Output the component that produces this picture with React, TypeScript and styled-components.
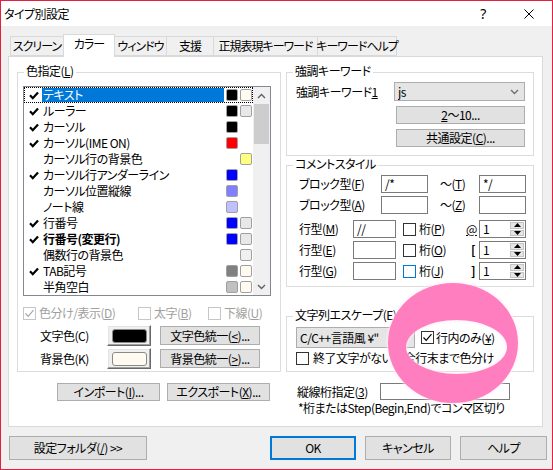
import React from "react";
import styled, { createGlobalStyle } from "styled-components";

const GlobalStyle = createGlobalStyle`
  * { box-sizing: border-box; }
  html, body { margin: 0; padding: 0; background: #ffffff; }
  body {
    font-family: "Noto Sans CJK JP", "Noto Sans", sans-serif;
    font-size: 12px;
    line-height: 16px;
    letter-spacing: -0.5px;
    color: #000;
    font-feature-settings: "palt";
  }
`;

type ColorItem = { name: string; on: boolean; fg?: string; bg?: string; bold?: boolean };

const colorItems: ColorItem[] = [
  { name: "テキスト", on: true, fg: "#000000", bg: "#fffbf0" },
  { name: "ルーラー", on: true, fg: "#000000", bg: "#e8e8e8" },
  { name: "カーソル", on: true, fg: "#000000" },
  { name: "カーソル(IME ON)", on: true, fg: "#ff0000" },
  { name: "カーソル行の背景色", on: false, bg: "#ffff80" },
  { name: "カーソル行アンダーライン", on: true, fg: "#0000ff" },
  { name: "カーソル位置縦線", on: false, fg: "#8080ff" },
  { name: "ノート線", on: false, fg: "#c0c0ff" },
  { name: "行番号", on: true, fg: "#0000ff", bg: "#e8e8e8" },
  { name: "行番号(変更行)", on: true, fg: "#0000ff", bg: "#e8e8e8", bold: true },
  { name: "偶数行の背景色", on: false, bg: "#f0f0f0" },
  { name: "TAB記号", on: true, fg: "#808080", bg: "#fffbf0" },
  { name: "半角空白", on: false, fg: "#c0c0c0", bg: "#fffbf0" },
];

const tabs = [
  { label: "スクリーン", w: 54 },
  { label: "カラー", w: 52, active: true },
  { label: "ウィンドウ", w: 53 },
  { label: "支援", w: 48 },
  { label: "正規表現キーワード", w: 105 },
  { label: "キーワードヘルプ", w: 80 },
];

const lineRows = [
  { label: "M", text: "//", digit: "P", sym: "@", focus: false },
  { label: "E", text: "", digit: "O", sym: "[", focus: false },
  { label: "G", text: "", digit: "J", sym: "]", focus: true },
];

const CheckMark = ({ color = "#000" }: { color?: string }) => (
  <svg width="11" height="11" viewBox="0 0 11 11">
    <polyline points="1.5,5.5 4.2,8.3 9.5,2.2" fill="none" stroke={color} strokeWidth="1.2" />
  </svg>
);

const ListCheck = () => (
  <svg width="10" height="9" viewBox="0 0 10 9">
    <polyline points="1,4.2 3.8,7.2 9,1.5" fill="none" stroke="#000" strokeWidth="2.2" />
  </svg>
);

const Chevron = ({ up, color = "#606060" }: { up?: boolean; color?: string }) => (
  <svg width="9" height="6" viewBox="0 0 9 6">
    <polyline
      points={up ? "1,5 4.5,1.5 8,5" : "1,1 4.5,4.5 8,1"}
      fill="none"
      stroke={color}
      strokeWidth="1.4"
    />
  </svg>
);

const Triangle = ({ up }: { up?: boolean }) => (
  <svg width="7" height="4" viewBox="0 0 7 4">
    <polygon points={up ? "0,4 3.5,0 7,4" : "0,0 3.5,4 7,0"} fill="#000" />
  </svg>
);

const CloseIcon = () => (
  <svg width="10" height="10" viewBox="0 0 10 10">
    <path d="M0.5 0.5 L9.5 9.5 M9.5 0.5 L0.5 9.5" stroke="#000" strokeWidth="1" />
  </svg>
);

const CheckBox = ({ checked, disabled, focus }: { checked?: boolean; disabled?: boolean; focus?: boolean }) => (
  <Box $disabled={disabled} $focus={focus}>
    {checked && <CheckMark color={disabled ? "#a8a8a8" : "#000"} />}
  </Box>
);

export default function App() {
  return (
    <>
      <GlobalStyle />
      <Window>
        <TitleBar>
          <TitleText>タイプ別設定</TitleText>
          <TitleButton>?</TitleButton>
          <TitleButton>
            <CloseIcon />
          </TitleButton>
        </TitleBar>

        <Body>
          <TabStrip>
            {tabs.map((t) => (
              <Tab key={t.label} $w={t.w} $active={!!t.active}>
                {t.label}
              </Tab>
            ))}
          </TabStrip>

          <Panel>
            <LeftColumn>
              <Group $mt={15} $pad="13px 5px 2px 5px">
                <GroupTitle>
                  色指定(<Key>L</Key>)
                </GroupTitle>
                <ColorList>
                  <ListRows>
                    {colorItems.map((item, i) => (
                      <ListRow key={item.name} $focused={i === 0}>
                        <CheckCell>{item.on && <ListCheck />}</CheckCell>
                        <ItemName $selected={i === 0} $bold={!!item.bold}>
                          {item.name}
                        </ItemName>
                        <Swatch $color={item.fg} />
                        <Swatch $color={item.bg} />
                      </ListRow>
                    ))}
                  </ListRows>
                  <ScrollBar>
                    <ScrollArrow>
                      <Chevron up />
                    </ScrollArrow>
                    <ScrollThumb />
                    <ScrollTrack />
                    <ScrollArrow>
                      <Chevron />
                    </ScrollArrow>
                  </ScrollBar>
                </ColorList>

                <OptionRow>
                  <Option $w={115}>
                    <CheckBox checked disabled />
                    <OptionText $disabled>
                      色分け/表示(<Key>D</Key>)
                    </OptionText>
                  </Option>
                  <Option $w={70}>
                    <CheckBox disabled />
                    <OptionText $disabled>
                      太字(<Key>B</Key>)
                    </OptionText>
                  </Option>
                  <Option>
                    <CheckBox disabled />
                    <OptionText $disabled>
                      下線(<Key>U</Key>)
                    </OptionText>
                  </Option>
                </OptionRow>

                <ColorRow $mt={4}>
                  <RowLabel $w={75} $pl={17}>
                    文字色(C)
                  </RowLabel>
                  <ColorButton>
                    <ColorChip $color="#000000" />
                  </ColorButton>
                  <PushButton $w={100} $h={19}>
                    文字色統一(<Key>&lt;</Key>)...
                  </PushButton>
                </ColorRow>
                <ColorRow $mt={2}>
                  <RowLabel $w={75} $pl={17}>
                    背景色(K)
                  </RowLabel>
                  <ColorButton>
                    <ColorChip $color="#fffbf0" />
                  </ColorButton>
                  <PushButton $w={100} $h={19}>
                    背景色統一(<Key>&gt;</Key>)...
                  </PushButton>
                </ColorRow>
              </Group>

              <ImportRow>
                <PushButton $w={103} $h={18}>
                  インポート(<Key>I</Key>)...
                </PushButton>
                <PushButton $w={103} $h={18}>
                  エクスポート(<Key>X</Key>)...
                </PushButton>
              </ImportRow>
            </LeftColumn>

            <RightColumn>
              <Group $mt={15} $pad="9px 8px 8px 9px">
                <GroupTitle>強調キーワード</GroupTitle>
                <KeywordGrid>
                  <RowLabel>
                    強調キーワード<Key>1</Key>
                  </RowLabel>
                  <Combo $w={131} $h={19}>
                    <ComboText>js</ComboText>
                    <Chevron color="#707070" />
                  </Combo>
                  <span />
                  <PushButton $w={129} $h={18}>
                    <Key>2</Key>～10...
                  </PushButton>
                  <span />
                  <PushButton $w={129} $h={18}>
                    共通設定(<Key>C</Key>)...
                  </PushButton>
                </KeywordGrid>
              </Group>

              <Group $mt={9} $pad="9px 7px 6px 12px">
                <GroupTitle>コメントスタイル</GroupTitle>
                <FieldRow>
                  <RowLabel $w={82}>
                    ブロック型(<Key>F</Key>)
                  </RowLabel>
                  <TextBox $w={47}>/*</TextBox>
                  <RowLabel $w={51} $pl={12}>
                    ～(<Key>T</Key>)
                  </RowLabel>
                  <TextBox $w={47}>*/</TextBox>
                </FieldRow>
                <FieldRow $mt={3}>
                  <RowLabel $w={82}>
                    ブロック型(<Key>A</Key>)
                  </RowLabel>
                  <TextBox $w={47} />
                  <RowLabel $w={51} $pl={12}>
                    ～(<Key>Z</Key>)
                  </RowLabel>
                  <TextBox $w={47} />
                </FieldRow>
                {lineRows.map((r, i) => (
                  <FieldRow key={r.label} $mt={i === 0 ? 6 : 3}>
                    <RowLabel $w={54}>
                      行型(<Key>{r.label}</Key>)
                    </RowLabel>
                    <TextBox $w={43}>{r.text}</TextBox>
                    <DigitOption>
                      <CheckBox focus={r.focus} />
                      <OptionText>
                        桁(<Key>{r.digit}</Key>)
                      </OptionText>
                    </DigitOption>
                    <Symbol $bold={r.sym !== "@"}>
                      {r.sym === "@" ? <Key>@</Key> : r.sym}
                    </Symbol>
                    <SpinBox>
                      <SpinValue>1</SpinValue>
                      <SpinButtons>
                        <SpinHalf>
                          <Triangle up />
                        </SpinHalf>
                        <SpinHalf>
                          <Triangle />
                        </SpinHalf>
                      </SpinButtons>
                    </SpinBox>
                  </FieldRow>
                ))}
              </Group>

              <Group $mt={29} $pad="10px 8px 5px 9px">
                <GroupTitle>文字列エスケープ(E)</GroupTitle>
                <FieldRow $h={21}>
                  <Combo $w={119} $h={21}>
                    <ComboText>C/C++言語風 ¥"</ComboText>
                    <Chevron color="#8a8a8a" />
                  </Combo>
                  <EscapeOption>
                    <CheckBox checked />
                    <OptionText>
                      行内のみ(<Key>¥</Key>)
                    </OptionText>
                  </EscapeOption>
                </FieldRow>
                <FieldRow $mt={2} $h={16}>
                  <CheckBox />
                  <OptionLabel>終了文字がない場合行末まで色分け</OptionLabel>
                </FieldRow>
              </Group>

              <VLineRow>
                <RowLabel $w={83}>
                  縦線桁指定(<Key>3</Key>)
                </RowLabel>
                <TextBox $w={130} $h={17} />
              </VLineRow>
              <Note>*桁またはStep(Begin,End)でコンマ区切り</Note>
            </RightColumn>
          </Panel>

          <Footer>
            <PushButton $w={138} $h={24}>
              設定フォルダ(<Key>/</Key>) &gt;&gt;
            </PushButton>
            <FooterButtons>
              <PushButton $w={86} $h={24} $default>
                OK
              </PushButton>
              <PushButton $w={86} $h={24}>
                キャンセル
              </PushButton>
              <PushButton $w={87} $h={24}>
                ヘルプ
              </PushButton>
            </FooterButtons>
          </Footer>
        </Body>

        <RingSvg width="150" height="135" viewBox="0 0 150 135">
          <defs>
            <filter id="soft" x="-10%" y="-10%" width="120%" height="120%">
              <feGaussianBlur stdDeviation="0.5" />
            </filter>
            <filter id="glow" x="-10%" y="-10%" width="120%" height="120%">
              <feGaussianBlur stdDeviation="1.6" />
            </filter>
          </defs>
          <path
            fillRule="evenodd"
            fill="rgba(255,235,245,0.9)"
            filter="url(#glow)"
            d="M6 66 a66 61 0 1 0 132 0 a66 61 0 1 0 -132 0 Z M26 70 a49.5 26 0 1 0 99 0 a49.5 26 0 1 0 -99 0 Z"
          />
          <path
            fillRule="evenodd"
            fill="#ff7ec0"
            filter="url(#soft)"
            d="M7 66 a65 60 0 1 0 130 0 a65 60 0 1 0 -130 0 Z M25 70 a50.5 27 0 1 0 101 0 a50.5 27 0 1 0 -101 0 Z"
          />
        </RingSvg>
      </Window>
    </>
  );
}

const Window = styled.div`
  position: relative;
  width: 553px;
  height: 470px;
  border: 1px solid #e3203f;
  background: #f0f0f0;
  display: flex;
  flex-direction: column;
  overflow: hidden;
`;

const TitleBar = styled.div`
  height: 25px;
  flex-shrink: 0;
  background: #ffffff;
  display: flex;
  align-items: center;
  padding-left: 3px;
`;

const TitleText = styled.span`
  flex: 1;
  font-size: 12px;
`;

const TitleButton = styled.span`
  width: 46px;
  height: 25px;
  display: flex;
  align-items: center;
  justify-content: center;
  font-family: "Noto Sans", sans-serif;
  font-size: 14px;
`;

const Body = styled.div`
  flex: 1;
  display: flex;
  flex-direction: column;
  padding: 8px 5px 0 7px;
`;

const TabStrip = styled.div`
  height: 22px;
  display: flex;
  align-items: flex-end;
  padding-left: 2px;
  position: relative;
  z-index: 1;
`;

const Tab = styled.div<{ $w: number; $active: boolean }>`
  width: ${(p) => p.$w}px;
  height: ${(p) => (p.$active ? 23 : 20)}px;
  margin-left: -1px;
  margin-bottom: ${(p) => (p.$active ? -1 : 0)}px;
  border: 1px solid #d9d9d9;
  border-bottom: ${(p) => (p.$active ? "none" : "1px solid #d9d9d9")};
  background: ${(p) => (p.$active ? "#ffffff" : "#f0f0f0")};
  display: flex;
  align-items: center;
  justify-content: center;
  padding-bottom: ${(p) => (p.$active ? 4 : 0)}px;
  letter-spacing: -1px;
  white-space: nowrap;
  position: relative;
  z-index: ${(p) => (p.$active ? 2 : 1)};
  &:first-child {
    margin-left: 0;
  }
`;

const Panel = styled.div`
  width: 535px;
  height: 371px;
  flex-shrink: 0;
  background: #ffffff;
  border: 1px solid #d9d9d9;
  display: flex;
  gap: 5px;
  padding-left: 8px;
`;

const LeftColumn = styled.div`
  width: 264px;
  display: flex;
  flex-direction: column;
`;

const RightColumn = styled.div`
  width: 248px;
  display: flex;
  flex-direction: column;
`;

const Group = styled.div<{ $mt: number; $pad: string }>`
  position: relative;
  margin-top: ${(p) => p.$mt}px;
  padding: ${(p) => p.$pad};
  border: 1px solid #dcdcdc;
`;

const GroupTitle = styled.span`
  position: absolute;
  top: -10px;
  left: 6px;
  padding: 0 2px;
  background: #ffffff;
  line-height: 16px;
  white-space: nowrap;
`;

const Key = styled.span`
  text-decoration: underline;
  text-underline-offset: 1px;
`;

const ColorList = styled.div`
  width: 248px;
  height: 210px;
  border: 1px solid #828790;
  display: flex;
  background: #ffffff;
`;

const ListRows = styled.div`
  flex: 1;
  display: flex;
  flex-direction: column;
`;

const ListRow = styled.div<{ $focused: boolean }>`
  height: 16px;
  display: flex;
  align-items: center;
  outline: ${(p) => (p.$focused ? "1px dotted #000" : "none")};
  outline-offset: -1px;
`;

const CheckCell = styled.span`
  width: 18px;
  height: 16px;
  padding-left: 5px;
  display: flex;
  align-items: center;
`;

const ItemName = styled.span<{ $selected: boolean; $bold: boolean }>`
  width: 182px;
  height: 14px;
  padding-left: 1px;
  line-height: 14px;
  white-space: nowrap;
  font-weight: ${(p) => (p.$bold ? 700 : 400)};
  background: ${(p) => (p.$selected ? "#0078d7" : "transparent")};
  color: ${(p) => (p.$selected ? "#ffffff" : "#000000")};
`;

const Swatch = styled.span<{ $color?: string }>`
  width: 12px;
  height: 12px;
  margin-left: 2px;
  border-radius: 2px;
  background: ${(p) => p.$color || "transparent"};
  border: 1px solid ${(p) => (p.$color ? "#a0a0a0" : "transparent")};
`;

const ScrollBar = styled.div`
  width: 17px;
  display: flex;
  flex-direction: column;
  background: #f0f0f0;
`;

const ScrollArrow = styled.div`
  height: 17px;
  display: flex;
  align-items: center;
  justify-content: center;
`;

const ScrollThumb = styled.div`
  height: 40px;
  margin: 0 1px;
  background: #cdcdcd;
`;

const ScrollTrack = styled.div`
  flex: 1;
`;

const OptionRow = styled.div`
  margin-top: 9px;
  height: 16px;
  display: flex;
  align-items: center;
`;

const Option = styled.label<{ $w?: number }>`
  ${(p) => (p.$w ? `width: ${p.$w}px;` : "")}
  display: flex;
  align-items: center;
  gap: 3px;
`;

const Box = styled.span<{ $disabled?: boolean; $focus?: boolean }>`
  width: 13px;
  height: 13px;
  flex-shrink: 0;
  background: #ffffff;
  border: 1px solid ${(p) => (p.$focus ? "#0078d7" : p.$disabled ? "#c6c6c6" : "#333333")};
  display: flex;
  align-items: center;
  justify-content: center;
`;

const OptionText = styled.span<{ $disabled?: boolean }>`
  white-space: nowrap;
  color: ${(p) => (p.$disabled ? "#a0a0a0" : "#000000")};
`;

const OptionLabel = styled.span`
  margin-left: 4px;
  white-space: nowrap;
`;

const ColorRow = styled.div<{ $mt: number }>`
  margin-top: ${(p) => p.$mt}px;
  height: 21px;
  display: flex;
  align-items: center;
  gap: 9px;
`;

const RowLabel = styled.span<{ $w?: number; $pl?: number }>`
  ${(p) => (p.$w ? `width: ${p.$w}px;` : "")}
  padding-left: ${(p) => p.$pl || 0}px;
  flex-shrink: 0;
  white-space: nowrap;
`;

const ColorButton = styled.div`
  width: 44px;
  height: 21px;
  background: #f0f0f0;
  border: 1px solid;
  border-color: #ffffff #696969 #696969 #ffffff;
  box-shadow: inset -1px -1px 0 #a0a0a0, inset 1px 1px 0 #e3e3e3;
  display: flex;
  align-items: center;
  justify-content: center;
`;

const ColorChip = styled.span<{ $color: string }>`
  width: 35px;
  height: 14px;
  border-radius: 3px;
  border: 1px solid #8a8a8a;
  background: ${(p) => p.$color};
`;

const PushButton = styled.div<{ $w: number; $h: number; $default?: boolean }>`
  width: ${(p) => p.$w}px;
  height: ${(p) => p.$h}px;
  flex-shrink: 0;
  background: #e1e1e1;
  border: ${(p) => (p.$default ? "2px solid #0078d7" : "1px solid #adadad")};
  display: flex;
  align-items: center;
  justify-content: center;
  white-space: nowrap;
`;

const ImportRow = styled.div`
  margin-top: 11px;
  padding-left: 40px;
  display: flex;
  gap: 7px;
`;

const KeywordGrid = styled.div`
  display: grid;
  grid-template-columns: 98px 131px;
  grid-template-rows: 19px 18px 18px;
  row-gap: 5px;
  align-items: center;
  justify-items: end;
  & > :first-child {
    justify-self: start;
  }
`;

const Combo = styled.div<{ $w: number; $h: number }>`
  width: ${(p) => p.$w}px;
  height: ${(p) => p.$h}px;
  flex-shrink: 0;
  background: #e5e5e5;
  border: 1px solid #adadad;
  display: flex;
  align-items: center;
  padding: 0 5px 0 3px;
`;

const ComboText = styled.span`
  flex: 1;
  white-space: nowrap;
  overflow: hidden;
`;

const FieldRow = styled.div<{ $mt?: number; $h?: number }>`
  margin-top: ${(p) => p.$mt || 0}px;
  height: ${(p) => p.$h || 18}px;
  display: flex;
  align-items: center;
`;

const TextBox = styled.div<{ $w: number; $h?: number }>`
  width: ${(p) => p.$w}px;
  height: ${(p) => p.$h || 18}px;
  flex-shrink: 0;
  background: #ffffff;
  border: 1px solid #7a7a7a;
  padding-left: 3px;
  line-height: 16px;
  white-space: nowrap;
`;

const DigitOption = styled.label`
  width: 70px;
  padding-left: 7px;
  display: flex;
  align-items: center;
  gap: 3px;
`;

const Symbol = styled.span<{ $bold: boolean }>`
  width: 13px;
  padding-right: 4px;
  text-align: right;
  font-weight: ${(p) => (p.$bold ? 700 : 400)};
`;

const SpinBox = styled.div`
  width: 47px;
  height: 18px;
  border: 1px solid #7a7a7a;
  background: #ffffff;
  display: flex;
`;

const SpinValue = styled.span`
  flex: 1;
  padding-left: 3px;
  line-height: 16px;
`;

const SpinButtons = styled.div`
  width: 16px;
  display: flex;
  flex-direction: column;
  gap: 1px;
  padding: 1px;
  background: #ffffff;
`;

const SpinHalf = styled.div`
  flex: 1;
  background: #e6e6e6;
  border: 1px solid #c4c4c4;
  display: flex;
  align-items: center;
  justify-content: center;
`;

const EscapeOption = styled.label`
  margin-left: 6px;
  display: flex;
  align-items: center;
  gap: 2px;
`;

const VLineRow = styled.div`
  margin-top: 11px;
  padding-left: 11px;
  height: 17px;
  display: flex;
  align-items: center;
`;

const Note = styled.div`
  padding-left: 12px;
  line-height: 16px;
  white-space: nowrap;
`;

const Footer = styled.div`
  margin-top: 9px;
  padding-left: 1px;
  display: flex;
  justify-content: space-between;
`;

const FooterButtons = styled.div`
  display: flex;
  gap: 9px;
`;

const RingSvg = styled.svg`
  position: absolute;
  left: 380px;
  top: 276px;
  overflow: visible;
  pointer-events: none;
`;
